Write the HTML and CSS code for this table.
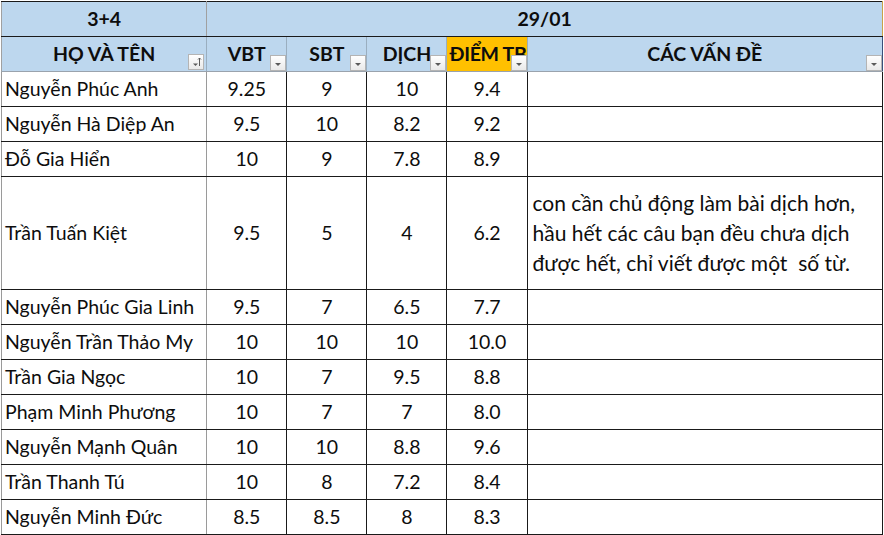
FILE: index.html
```html
<!DOCTYPE html>
<html lang="vi">
<head>
<meta charset="utf-8">
<title>3+4 — 29/01</title>
<link rel="stylesheet" href="styles.css">
</head>
<body>
<table class="sheet">
  <colgroup>
    <col class="c-name"><col class="c-num"><col class="c-num"><col class="c-num"><col class="c-num"><col class="c-note">
  </colgroup>
  <thead>
    <tr class="r-title">
      <th class="t-class">3+4</th>
      <th class="t-date" colspan="5">29/01</th>
    </tr>
    <tr class="r-head">
      <th class="h-name">HỌ VÀ TÊN<span class="fbtn sort"><svg width="14" height="14" viewBox="0 0 14 14"><path d="M4 8.5h5l-2.5 2.5z" fill="#5a5a5a"/><path d="M10.5 3v8M9 4.5l1.5-1.5 1.5 1.5" stroke="#5a5a5a" stroke-width="1" fill="none"/></svg></span></th>
      <th class="h-num">VBT<span class="fbtn"></span></th>
      <th class="h-num">SBT<span class="fbtn"></span></th>
      <th class="h-num">DỊCH<span class="fbtn"></span></th>
      <th class="h-num h-total"><span class="total-label">ĐIỂM TB</span><span class="fbtn"></span></th>
      <th class="h-note">CÁC VẤN ĐỀ<span class="fbtn"></span></th>
    </tr>
  </thead>
  <tbody>
    <tr><td class="name">Nguyễn Phúc Anh</td><td>9.25</td><td>9</td><td>10</td><td>9.4</td><td class="note"></td></tr>
    <tr><td class="name">Nguyễn Hà Diệp An</td><td>9.5</td><td>10</td><td>8.2</td><td>9.2</td><td class="note"></td></tr>
    <tr><td class="name">Đỗ Gia Hiển</td><td>10</td><td>9</td><td>7.8</td><td>8.9</td><td class="note"></td></tr>
    <tr class="tall"><td class="name">Trần Tuấn Kiệt</td><td>9.5</td><td>5</td><td>4</td><td>6.2</td><td class="note">con cần chủ động làm bài dịch hơn,<br>hầu hết các câu bạn đều chưa dịch<br>được hết, chỉ viết được một&nbsp; số từ.</td></tr>
    <tr><td class="name">Nguyễn Phúc Gia Linh</td><td>9.5</td><td>7</td><td>6.5</td><td>7.7</td><td class="note"></td></tr>
    <tr><td class="name">Nguyễn Trần Thảo My</td><td>10</td><td>10</td><td>10</td><td>10.0</td><td class="note"></td></tr>
    <tr><td class="name">Trần Gia Ngọc</td><td>10</td><td>7</td><td>9.5</td><td>8.8</td><td class="note"></td></tr>
    <tr><td class="name">Phạm Minh Phương</td><td>10</td><td>7</td><td>7</td><td>8.0</td><td class="note"></td></tr>
    <tr><td class="name">Nguyễn Mạnh Quân</td><td>10</td><td>10</td><td>8.8</td><td>9.6</td><td class="note"></td></tr>
    <tr><td class="name">Trần Thanh Tú</td><td>10</td><td>8</td><td>7.2</td><td>8.4</td><td class="note"></td></tr>
    <tr><td class="name">Nguyễn Minh Đức</td><td>8.5</td><td>8.5</td><td>8</td><td>8.3</td><td class="note"></td></tr>
  </tbody>
</table>
</body>
</html>
```

FILE: styles.css
```css
html, body {
  margin: 0;
  padding: 0;
  background: #ffffff;
}

body {
  padding: 1px 0 0 1px;
  font-family: Lato, "Noto Sans", sans-serif;
  color: #0d0d0d;
}

.sheet {
  border-collapse: collapse;
  table-layout: fixed;
  width: 882px;
}

.c-name { width: 205px; }
.c-num { width: 80px; }
.c-note { width: 355px; }

.sheet th,
.sheet td {
  padding: 0;
  border: 1px solid #1a1a1a;
  text-align: center;
  vertical-align: middle;
  font-size: 19.5px;
  line-height: 22px;
  white-space: nowrap;
  overflow: hidden;
}

.sheet tr { height: 35px; }

.r-title th {
  height: 34px;
  background: #bdd7ee;
  font-weight: 700;
  border-top-color: #1a1a1a;
}

.r-title .t-class { border-right-color: #a0a0a0; border-left-color: #a0a0a0; }
.r-title .t-date { border-right-color: #c9a24a; }

.r-head th {
  position: relative;
  height: 34px;
  background: #bdd7ee;
  font-weight: 700;
  border-top-color: #1a1a1a;
  border-bottom-color: #9aa3ad;
  border-left-color: #9aaebf;
  border-right-color: #9aaebf;
}

.r-head .h-name { border-left-color: #a0a0a0; }
.r-head .h-total {
  background: #ffc000;
  text-align: left;
  padding-left: 2px;
  overflow: visible;
}
.total-label { letter-spacing: -0.3px; }
.r-head .h-note { border-right-color: #3a4f7a; }

.fbtn {
  position: absolute;
  right: 0;
  bottom: 0;
  width: 14px;
  height: 14px;
  border: 1px solid #b4b4b4;
  background: linear-gradient(#ffffff, #e9e9e9);
}

.fbtn::after {
  content: "";
  position: absolute;
  left: 4px;
  top: 7px;
  border-left: 3px solid transparent;
  border-right: 3px solid transparent;
  border-top: 3px solid #5a5a5a;
}

.fbtn.sort { right: 2px; }
.fbtn.sort::after { display: none; }
.fbtn svg { display: block; }

.h-name .fbtn { bottom: 1px; }

td.name {
  text-align: left;
  padding-left: 3px;
  border-left-color: #9a9a9a;
  border-right-color: #9a9a9a;
}

tbody td { font-weight: 400; }

tr.tall { height: 113px; }

td.note {
  text-align: left;
  padding-left: 5px;
  font-size: 21px;
  line-height: 30px;
}
```
